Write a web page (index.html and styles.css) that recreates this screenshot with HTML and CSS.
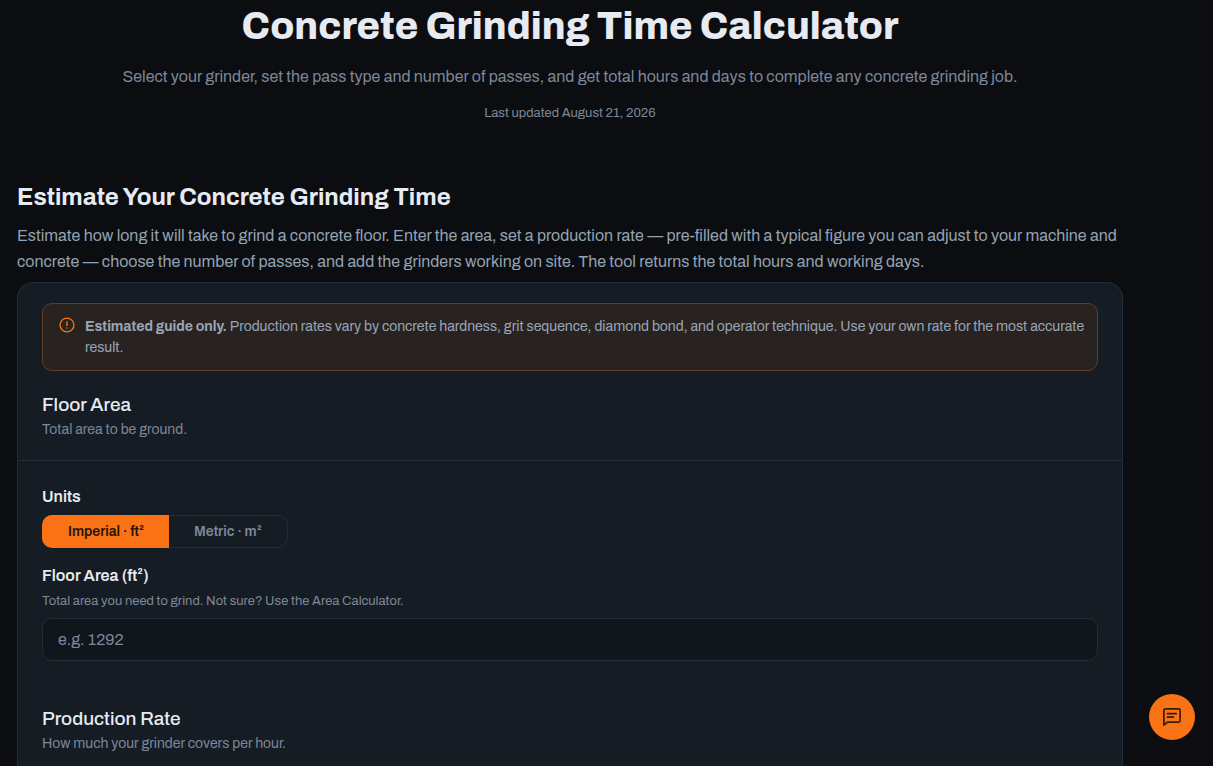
FILE: index.html
```html
<!DOCTYPE html>
<html lang="en">
<head>
<meta charset="utf-8">
<meta name="viewport" content="width=device-width, initial-scale=1">
<title>Concrete Grinding Time Calculator</title>
<link rel="stylesheet" href="styles.css">
</head>
<body>
<main class="page">
  <header class="hero">
    <h1 class="hero-title">Concrete Grinding Time Calculator</h1>
    <p class="hero-lead">Select your grinder, set the pass type and number of passes, and get total hours and days to complete any concrete grinding job.</p>
    <p class="hero-date">Last updated August 21, 2026</p>
  </header>
  <section class="intro">
    <h2 class="intro-title">Estimate Your Concrete Grinding Time</h2>
    <p class="intro-text">Estimate how long it will take to grind a concrete floor. Enter the area, set a production rate — pre-filled with a typical figure you can adjust to your machine and concrete — choose the number of passes, and add the grinders working on site. The tool returns the total hours and working days.</p>
  </section>
  <form class="card">
    <div class="notice">
      <svg class="notice-icon" viewBox="0 0 16 16" fill="none" stroke="currentColor" stroke-width="1.4" stroke-linecap="round" aria-hidden="true"><circle cx="8" cy="8" r="6.9"/><path d="M8 5v3.4M8 11v.1"/></svg>
      <p class="notice-text"><strong>Estimated guide only.</strong> Production rates vary by concrete hardness, grit sequence, diamond bond, and operator technique. Use your own rate for the most accurate result.</p>
    </div>
    <div class="section-head">
      <h3 class="section-title">Floor Area</h3>
      <p class="section-text">Total area to be ground.</p>
    </div>
    <div class="fields">
      <span class="label" id="units-label">Units</span>
      <div class="toggle" role="group" aria-labelledby="units-label">
        <button class="toggle-option toggle-option-active" type="button" aria-pressed="true">Imperial · ft²</button>
        <button class="toggle-option" type="button" aria-pressed="false">Metric · m²</button>
      </div>
      <label class="label" for="floor-area">Floor Area (ft²)</label>
      <p class="hint" id="area-hint">Total area you need to grind. Not sure? Use the Area Calculator.</p>
      <input class="input" id="floor-area" type="text" inputmode="decimal" placeholder="e.g. 1292" aria-describedby="area-hint">
    </div>
    <div class="section-head">
      <h3 class="section-title">Production Rate</h3>
      <p class="section-text">How much your grinder covers per hour.</p>
    </div>
  </form>
</main>
<button class="chat" type="button" aria-label="Open feedback">
  <svg class="chat-icon" viewBox="0 0 20 20" fill="none" stroke="currentColor" stroke-width="1.7" stroke-linecap="round" stroke-linejoin="round" aria-hidden="true"><path d="M1.9 18V3.4Q1.9 1.9 3.4 1.9H16.6Q18.1 1.9 18.1 3.4V13.6Q18.1 15.1 16.6 15.1H5.6Z"/><path d="M5.6 6.7H14.2M5.6 10.2H11.3"/></svg>
</button>
</body>
</html>
```
FILE: styles.css
```css
* { box-sizing: border-box; }
html { scrollbar-width: none; }
body {
  margin: 0;
  background: #0b0d10;
  color: #e8eaf2;
  font-family: Archivo, "Liberation Sans", Arial, sans-serif;
}
h1, h2, h3, p { margin: 0; }
button, input { font: inherit; }

.page {
  display: flex;
  flex-direction: column;
  max-width: 1140px;
  min-height: 100vh;
  padding: 0 17px;
}

.hero { padding-top: 3px; text-align: center; }
.hero-title { font-size: 38px; line-height: 48px; font-weight: 800; }
.hero-lead { margin-top: 13px; font-size: 16px; line-height: 26px; color: #7d879a; }
.hero-date { margin-top: 13px; font-size: 13px; line-height: 20px; color: #7d879a; }

.intro { margin-top: 58px; }
.intro-title { font-size: 24px; line-height: 32px; font-weight: 700; }
.intro-text { margin-top: 10px; font-size: 16px; line-height: 26px; color: #94a3b3; }

.card {
  flex: 1;
  margin-top: 7px;
  padding-top: 20px;
  border: 1px solid #232d38;
  border-bottom: 0;
  border-radius: 16px 16px 0 0;
  background: #161c23;
}
.notice {
  display: flex;
  gap: 10px;
  margin: 0 24px;
  padding: 12px 12px 12px 16px;
  border: 1px solid #643d28;
  border-radius: 10px;
  background: #282321;
}
.notice-icon { flex: none; width: 16px; height: 16px; margin-top: 1px; color: #f97316; }
.notice-text { font-size: 14px; line-height: 21px; color: #9aa5b5; }

.section-head { padding: 20px 24px; }
.section-title { font-size: 19px; line-height: 28px; font-weight: 500; }
.section-text { font-size: 14px; line-height: 21px; color: #7d879a; }

.fields {
  display: flex;
  flex-direction: column;
  align-items: flex-start;
  padding: 24px 24px 24px;
  border-top: 1px solid #232d38;
}
.label { font-size: 16px; line-height: 24px; font-weight: 600; }
.toggle {
  display: flex;
  margin: 6px 0 16px;
  border: 1px solid #232d38;
  border-radius: 10px;
}
.toggle-option {
  padding: 0 25px;
  border: 0;
  border-radius: 0 9px 9px 0;
  background: transparent;
  color: #7d879a;
  font-size: 14px;
  line-height: 31px;
  font-weight: 600;
}
.toggle-option-active {
  margin: -1px 0 -1px -1px;
  padding-left: 26px;
  border-radius: 10px 0 0 10px;
  background: #f97316;
  color: #291505;
}
.hint { margin-top: 3px; font-size: 13px; line-height: 20px; color: #7d879a; }
.input {
  width: 100%;
  height: 43px;
  margin-top: 7px;
  padding: 0 15px;
  border: 1px solid #232d38;
  border-radius: 10px;
  background: #11151c;
  color: #e8eaf2;
  font-size: 16px;
}
.input::placeholder { color: #7d879a; opacity: 1; }

.chat {
  position: fixed;
  right: 18px;
  bottom: 26px;
  display: grid;
  place-items: center;
  width: 46px;
  height: 46px;
  padding: 0;
  border: 0;
  border-radius: 50%;
  background: #f97316;
  color: #3a1c06;
}
.chat-icon { width: 20px; height: 20px; }
```
